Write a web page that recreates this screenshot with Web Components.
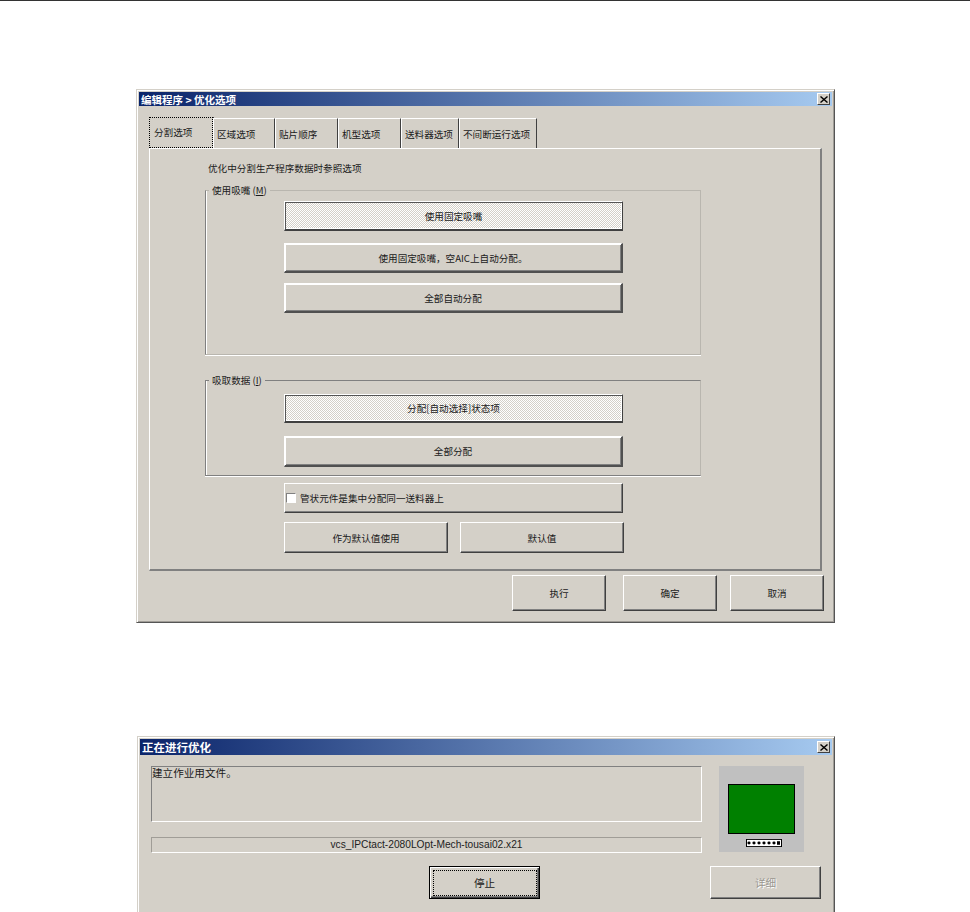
<!DOCTYPE html>
<html lang="zh">
<head>
<meta charset="utf-8">
<title>优化选项</title>
<style>
    html, body { margin: 0; height: 912px; overflow: hidden; background: #fff; }
    body { font-family: "Noto Sans CJK SC", "Liberation Sans", sans-serif; font-size: 9.6px; color: #1a1a1a; }
</style>
</head>
<body>
<page-rule></page-rule>

<win-window title-text="编辑程序 > 优化选项" title-size="10.5px" title-height="14px" style="margin: 88px 135px 0 136px;">
    <div style="padding: 11px 0 0 10px;">
        <tab-strip>
            <tab-item selected style="width: 64px;">分割选项</tab-item>
            <tab-item style="width: 62px;">区域选项</tab-item>
            <tab-item style="width: 63px;">贴片顺序</tab-item>
            <tab-item style="width: 63px;">机型选项</tab-item>
            <tab-item style="width: 58px;">送料器选项</tab-item>
            <tab-item style="width: 78px;">不间断运行选项</tab-item>
        </tab-strip>
        <tab-panel>
            <div style="margin: 0 0 16px 3px; height: 12px; line-height: 12px;">优化中分割生产程序数据时参照选项</div>
            <win-group legend="使用吸嘴 (M)" style="height: 165px; --top: #b9b6af; --bottom: #b9b6af;">
                <win-button pressed style="width: 339px; height: 30px; margin-top: 10px;">使用固定吸嘴</win-button>
                <win-button raised style="width: 339px; height: 30px; margin-top: 12px;">使用固定吸嘴，空AIC上自动分配。</win-button>
                <win-button raised style="width: 339px; height: 30px; margin-top: 10px;">全部自动分配</win-button>
            </win-group>
            <win-group legend="吸取数据 (I)" style="height: 96px; margin-top: 25px; --top: #808080; --bottom: #808080;">
                <win-button pressed style="width: 339px; height: 29px; margin-top: 13px;">分配[自动选择]状态项</win-button>
                <win-button raised style="width: 339px; height: 31px; margin-top: 13px;">全部分配</win-button>
            </win-group>
            <div style="margin-left: 79px;">
                <win-button align="left" style="width: 339px; height: 30px; margin-top: 7px;"><win-check>管状元件是集中分配同一送料器上</win-check></win-button>
                <div style="display: flex; gap: 12px; margin-top: 9px;">
                    <win-button style="width: 164px; height: 31px;">作为默认值使用</win-button>
                    <win-button style="width: 164px; height: 31px;">默认值</win-button>
                </div>
            </div>
        </tab-panel>
        <div style="display: flex; margin: 4px 0 0 363px; height: 36px;">
            <win-button style="width: 94px; height: 36px;">执行</win-button>
            <win-button style="width: 94px; height: 36px; margin-left: 17px;">确定</win-button>
            <win-button style="width: 94px; height: 36px; margin-left: 13px;">取消</win-button>
        </div>
        <div style="height: 9px;"></div>
    </div>
</win-window>

<win-window title-text="正在进行优化" title-size="11.5px" title-height="16px" style="margin: 113px 135px 0 137px;">
    <div style="display: grid; grid-template-columns: 551px 85px; column-gap: 17px; padding: 11px 0 0 11px;">
        <div>
            <sunken-box style="height: 56px; font-size: 10.6px;">建立作业用文件。</sunken-box>
            <sunken-box centered style="height: 16px; margin-top: 15px;">vcs_IPCtact-2080LOpt-Mech-tousai02.x21</sunken-box>
        </div>
        <machine-preview></machine-preview>
    </div>
    <div style="display: flex; gap: 170px; padding: 13px 0 14px 289px;">
        <win-button focused style="width: 111px; height: 33px; font-size: 10.6px;">停止</win-button>
        <win-button disabled style="width: 111px; height: 33px; font-size: 10.6px;">详细</win-button>
    </div>
</win-window>

<script>
class PageRule extends HTMLElement {
    constructor() {
        super();
        this.attachShadow({ mode: 'open' });
        this.shadowRoot.innerHTML = `<style>:host { display: block; height: 1px; background: #333; }</style>`;
    }
}

class WinWindow extends HTMLElement {
    constructor() {
        super();
        this.attachShadow({ mode: 'open' });
        this.shadowRoot.innerHTML = `
            <style>
                :host {
                    display: block;
                    box-sizing: border-box;
                    background: #d4d0c8;
                    padding: 2px;
                    border: 1px solid #d4d0c8;
                    border-right-color: #555;
                    border-bottom-color: #555;
                    box-shadow: inset 1px 1px 0 #fff, inset -1px -1px 0 #a09d97;
                }
                .title {
                    display: flex;
                    align-items: center;
                    justify-content: space-between;
                    background: linear-gradient(90deg, #0a246a, #a6caf0);
                    color: #fff;
                    font-weight: 700;
                    padding: 0 2px;
                    white-space: pre;
                }
                .close {
                    display: flex;
                    align-items: center;
                    justify-content: center;
                    width: 13px;
                    height: 12px;
                    box-sizing: border-box;
                    background: #d4d0c8;
                    border: 1px solid;
                    border-color: #fff #404040 #404040 #fff;
                }
            </style>
            <div class="title"><span class="text"></span><span class="close"><svg width="8" height="7" viewBox="0 0 8 7"><path d="M0.5 0.5 L7.5 6.5 M7.5 0.5 L0.5 6.5" stroke="#000" stroke-width="1.4" fill="none"/></svg></span></div>
            <slot></slot>
        `;
    }

    connectedCallback() {
        const title = this.shadowRoot.querySelector('.title');
        this.shadowRoot.querySelector('.text').textContent = this.getAttribute('title-text');
        title.style.fontSize = this.getAttribute('title-size');
        title.style.height = this.getAttribute('title-height');
    }
}

class TabStrip extends HTMLElement {
    constructor() {
        super();
        this.attachShadow({ mode: 'open' });
        this.shadowRoot.innerHTML = `
            <style>:host { display: flex; align-items: flex-end; height: 31px; }</style>
            <slot></slot>
        `;
    }
}

class TabItem extends HTMLElement {
    constructor() {
        super();
        this.attachShadow({ mode: 'open' });
        this.shadowRoot.innerHTML = `
            <style>
                :host {
                    display: flex;
                    align-items: center;
                    box-sizing: border-box;
                    height: 30px;
                    padding-left: 3px;
                    background: #d4d0c8;
                    border-top: 1px solid #fff;
                    border-left: 1px solid #fff;
                    border-right: 1px solid #404040;
                    white-space: nowrap;
                }
                :host([selected]) {
                    height: 31px;
                    padding: 0 0 2px 4px;
                    border: 1px dotted #000;
                    box-shadow: 1px 0 0 #404040;
                }
            </style>
            <slot></slot>
        `;
    }
}

class TabPanel extends HTMLElement {
    constructor() {
        super();
        this.attachShadow({ mode: 'open' });
        this.shadowRoot.innerHTML = `
            <style>
                :host {
                    display: block;
                    box-sizing: border-box;
                    width: 673px;
                    height: 423px;
                    padding: 13px 0 0 55px;
                    border: 1px solid #fff;
                    border-right: 2px solid #808080;
                    border-bottom: 2px solid #808080;
                }
            </style>
            <slot></slot>
        `;
    }
}

class WinGroup extends HTMLElement {
    constructor() {
        super();
        this.attachShadow({ mode: 'open' });
        this.shadowRoot.innerHTML = `
            <style>
                :host {
                    display: block;
                    position: relative;
                    box-sizing: border-box;
                    width: 496px;
                    padding-left: 78px;
                    border-top: 1px solid var(--top, #808080);
                    border-bottom: 1px solid var(--bottom, #808080);
                    border-left: 1px solid #808080;
                    border-right: 1px solid #b9b6af;
                    box-shadow: inset 1px 0 0 #fff, 0 1px 0 #fff;
                }
                .legend {
                    position: absolute;
                    left: 3px;
                    top: -7px;
                    padding: 0 3px;
                    height: 12px;
                    line-height: 12px;
                    background: #d4d0c8;
                }
            </style>
            <div class="legend"></div>
            <slot></slot>
        `;
    }

    connectedCallback() {
        // the access key letter is underlined, like on the native control
        const match = this.getAttribute('legend').match(/^(.*\()(.)(\))$/);
        const legend = this.shadowRoot.querySelector('.legend');
        legend.append(match[1]);
        const key = document.createElement('u');
        key.textContent = match[2];
        legend.append(key, match[3]);
    }
}

class WinButton extends HTMLElement {
    constructor() {
        super();
        this.attachShadow({ mode: 'open' });
        this.shadowRoot.innerHTML = `
            <style>
                :host {
                    display: flex;
                    align-items: center;
                    justify-content: center;
                    box-sizing: border-box;
                    background: #d4d0c8;
                    border: 1px solid;
                    border-color: #fff #404040 #404040 #fff;
                    box-shadow: inset -1px -1px 0 #808080;
                    white-space: nowrap;
                }
                :host([align="left"]) { justify-content: flex-start; padding-left: 1px; }
                :host([raised]) {
                    border-width: 1px 2px 2px 1px;
                    border-color: #fff #505050 #505050 #fff;
                    box-shadow: inset 1px 1px 0 #fff, inset -1px -1px 0 #808080;
                }
                :host([pressed]) {
                    border-width: 1px 1px 2px 1px;
                    box-shadow: inset 1px 1px 0 #555, inset -1px -1px 0 #fff;
                    background-color: #d4d0c8;
                    background-image: conic-gradient(#fff 25%, #d4d0c8 0 50%, #fff 0 75%, #d4d0c8 0);
                    background-size: 2px 2px;
                }
                :host([focused]) {
                    border-color: #000;
                    box-shadow: inset 1px 1px 0 #fff, inset -1px -1px 0 #404040, inset -2px -2px 0 #808080;
                }
                .focus { display: contents; }
                :host([focused]) .focus {
                    display: flex;
                    align-items: center;
                    justify-content: center;
                    width: calc(100% - 5px);
                    height: calc(100% - 5px);
                    border: 1px dotted #000;
                    box-sizing: border-box;
                }
                :host([disabled]) {
                    color: #9a9790;
                    text-shadow: 1px 1px 0 #fff;
                }
            </style>
            <span class="focus"><slot></slot></span>
        `;
    }
}

class WinCheck extends HTMLElement {
    constructor() {
        super();
        this.attachShadow({ mode: 'open' });
        this.shadowRoot.innerHTML = `
            <style>
                :host { display: flex; align-items: center; gap: 4px; }
                .box {
                    width: 10px;
                    height: 10px;
                    box-sizing: border-box;
                    background: #fff;
                    border: 1px solid;
                    border-color: #808080 #fff #fff #808080;
                }
            </style>
            <span class="box"></span><slot></slot>
        `;
    }
}

class SunkenBox extends HTMLElement {
    constructor() {
        super();
        this.attachShadow({ mode: 'open' });
        this.shadowRoot.innerHTML = `
            <style>
                :host {
                    display: block;
                    box-sizing: border-box;
                    border: 1px solid;
                    border-color: #808080 #fff #fff #808080;
                    line-height: 12px;
                }
                :host([centered]) {
                    text-align: center;
                    font: 10.2px/14px "Liberation Sans", sans-serif;
                    color: #222;
                    border-top-color: #a09d97;
                    border-left-color: #a09d97;
                }
            </style>
            <slot></slot>
        `;
    }
}

class MachinePreview extends HTMLElement {
    constructor() {
        super();
        this.attachShadow({ mode: 'open' });
        const dots = [3, 8, 13, 18, 23, 28].map(x => `<circle cx="${x}" cy="4.5" r="1.6"/>`).join('');
        this.shadowRoot.innerHTML = `
            <style>
                :host {
                    display: flex;
                    flex-direction: column;
                    align-items: flex-start;
                    height: 86px;
                    box-sizing: border-box;
                    padding: 18px 0 0 9px;
                    background: #c0c0c0;
                }
                .screen {
                    width: 67px;
                    height: 50px;
                    box-sizing: border-box;
                    background: #008000;
                    border: 1px solid #000;
                    flex: none;
                }
                svg { display: block; margin: 5px 0 0 18px; flex: none; }
            </style>
            <div class="screen"></div>
            <svg width="36" height="8" viewBox="0 0 36 9" preserveAspectRatio="none">
                <rect x="0.5" y="0.5" width="35" height="8" fill="#fff" stroke="#000"/>
                ${dots}
                <rect x="31" y="2.5" width="3" height="4"/>
            </svg>
        `;
    }
}

customElements.define('page-rule', PageRule);
customElements.define('win-window', WinWindow);
customElements.define('tab-strip', TabStrip);
customElements.define('tab-item', TabItem);
customElements.define('tab-panel', TabPanel);
customElements.define('win-group', WinGroup);
customElements.define('win-button', WinButton);
customElements.define('win-check', WinCheck);
customElements.define('sunken-box', SunkenBox);
customElements.define('machine-preview', MachinePreview);
</script>
</body>
</html>
